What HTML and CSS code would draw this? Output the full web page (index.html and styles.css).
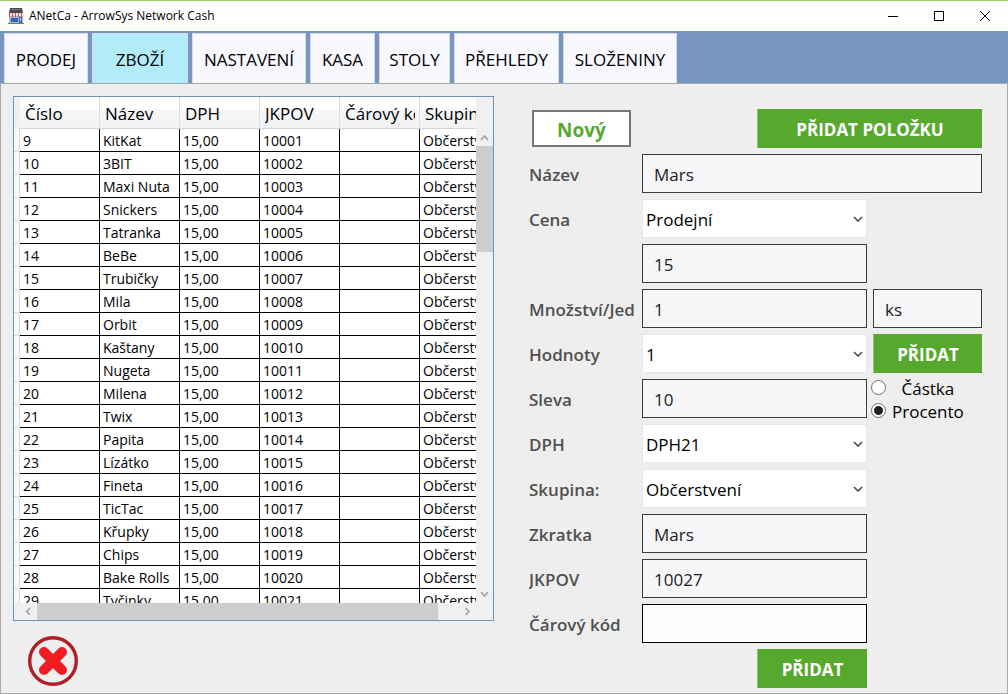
FILE: index.html
```html
<!DOCTYPE html>
<html lang="cs">
<head>
<meta charset="utf-8">
<title>ANetCa - ArrowSys Network Cash</title>
<link rel="stylesheet" href="styles.css">
</head>
<body>
<header class="titlebar">
  <svg class="app-icon" viewBox="0 0 16 16" aria-hidden="true">
    <path d="M2 0h12l1 5H1z" fill="#4a4a4e"/>
    <path d="M3 1h10v1H3z" fill="#77777c"/>
    <path d="M1 6h14v9H1z" fill="#a9b3c4"/>
    <path d="M0 5h16v3H0z" fill="#f4eeee"/>
    <path d="M1 5h1v4H1zM4 5h1v4H4zM7 5h1v4H7zM10 5h1v4h-1zM13 5h1v4h-1z" fill="#cf4a4a"/>
    <path d="M3 10h7v4H3z" fill="#2f62b5"/>
    <path d="M11 9h3v6h-3z" fill="#3a6cc0"/>
    <path d="M12 10h1v3h-1z" fill="#a8c6ee"/>
    <path d="M0 15h16v1H0z" fill="#77777c"/>
  </svg>
  <h1 class="title">ANetCa - ArrowSys Network Cash</h1>
  <div class="window-buttons">
    <button type="button" aria-label="Minimalizovat"><svg viewBox="0 0 10 10"><path d="M0 5.5h10"/></svg></button>
    <button type="button" aria-label="Maximalizovat"><svg viewBox="0 0 10 10"><path d="M.5.5h9v9h-9z"/></svg></button>
    <button type="button" aria-label="Zavřít"><svg viewBox="0 0 10 10"><path d="M0 0l10 10M10 0L0 10"/></svg></button>
  </div>
</header>
<nav class="tabs">
  <button type="button" class="tab">PRODEJ</button>
  <button type="button" class="tab active" aria-current="page">ZBOŽÍ</button>
  <button type="button" class="tab">NASTAVENÍ</button>
  <button type="button" class="tab">KASA</button>
  <button type="button" class="tab">STOLY</button>
  <button type="button" class="tab">PŘEHLEDY</button>
  <button type="button" class="tab">SLOŽENINY</button>
</nav>
<main class="content">
  <section class="left">
    <div class="datagrid">
      <div class="viewport">
        <table class="goods">
          <colgroup><col class="col-mark"><col><col><col><col><col><col></colgroup>
          <thead><tr><td class="mark"></td><th><div>Číslo</div></th><th><div>Název</div></th><th><div>DPH</div></th><th><div>JKPOV</div></th><th><div>Čárový kód</div></th><th><div>Skupina</div></th></tr></thead>
          <tbody>
            <tr><td class="mark"></td><td>9</td><td>KitKat</td><td>15,00</td><td>10001</td><td></td><td>Občerstvení</td></tr>
            <tr><td class="mark"></td><td>10</td><td>3BIT</td><td>15,00</td><td>10002</td><td></td><td>Občerstvení</td></tr>
            <tr><td class="mark"></td><td>11</td><td>Maxi Nuta</td><td>15,00</td><td>10003</td><td></td><td>Občerstvení</td></tr>
            <tr><td class="mark"></td><td>12</td><td>Snickers</td><td>15,00</td><td>10004</td><td></td><td>Občerstvení</td></tr>
            <tr><td class="mark"></td><td>13</td><td>Tatranka</td><td>15,00</td><td>10005</td><td></td><td>Občerstvení</td></tr>
            <tr><td class="mark"></td><td>14</td><td>BeBe</td><td>15,00</td><td>10006</td><td></td><td>Občerstvení</td></tr>
            <tr><td class="mark"></td><td>15</td><td>Trubičky</td><td>15,00</td><td>10007</td><td></td><td>Občerstvení</td></tr>
            <tr><td class="mark"></td><td>16</td><td>Mila</td><td>15,00</td><td>10008</td><td></td><td>Občerstvení</td></tr>
            <tr><td class="mark"></td><td>17</td><td>Orbit</td><td>15,00</td><td>10009</td><td></td><td>Občerstvení</td></tr>
            <tr><td class="mark"></td><td>18</td><td>Kaštany</td><td>15,00</td><td>10010</td><td></td><td>Občerstvení</td></tr>
            <tr><td class="mark"></td><td>19</td><td>Nugeta</td><td>15,00</td><td>10011</td><td></td><td>Občerstvení</td></tr>
            <tr><td class="mark"></td><td>20</td><td>Milena</td><td>15,00</td><td>10012</td><td></td><td>Občerstvení</td></tr>
            <tr><td class="mark"></td><td>21</td><td>Twix</td><td>15,00</td><td>10013</td><td></td><td>Občerstvení</td></tr>
            <tr><td class="mark"></td><td>22</td><td>Papita</td><td>15,00</td><td>10014</td><td></td><td>Občerstvení</td></tr>
            <tr><td class="mark"></td><td>23</td><td>Lízátko</td><td>15,00</td><td>10015</td><td></td><td>Občerstvení</td></tr>
            <tr><td class="mark"></td><td>24</td><td>Fineta</td><td>15,00</td><td>10016</td><td></td><td>Občerstvení</td></tr>
            <tr><td class="mark"></td><td>25</td><td>TicTac</td><td>15,00</td><td>10017</td><td></td><td>Občerstvení</td></tr>
            <tr><td class="mark"></td><td>26</td><td>Křupky</td><td>15,00</td><td>10018</td><td></td><td>Občerstvení</td></tr>
            <tr><td class="mark"></td><td>27</td><td>Chips</td><td>15,00</td><td>10019</td><td></td><td>Občerstvení</td></tr>
            <tr><td class="mark"></td><td>28</td><td>Bake Rolls</td><td>15,00</td><td>10020</td><td></td><td>Občerstvení</td></tr>
            <tr><td class="mark"></td><td>29</td><td>Tyčinky</td><td>15,00</td><td>10021</td><td></td><td>Občerstvení</td></tr>
          </tbody>
        </table>
      </div>
      <div class="vscroll" aria-hidden="true">
        <svg class="arrow" viewBox="0 0 17 17"><path d="M5 11l3.500-4 3.500 4"/></svg>
        <div class="track"><div class="vthumb"></div></div>
        <svg class="arrow" viewBox="0 0 17 17"><path d="M5 6l3.500 4 3.500-4"/></svg>
      </div>
      <div class="hscroll" aria-hidden="true">
        <svg class="arrow" viewBox="0 0 17 17"><path d="M10 5L6.500 8.500 10 12"/></svg>
        <div class="track"><div class="hthumb"></div></div>
        <svg class="arrow" viewBox="0 0 17 17"><path d="M6.500 5L10 8.500 6.500 12"/></svg>
      </div>
    </div>
    <button type="button" class="delete" aria-label="Smazat">
      <svg viewBox="0 0 50 50"><circle cx="25" cy="25" r="23.300" fill="none" stroke="#ae2026" stroke-width="3.400"/><path d="M16 16l18 18M34 16L16 34" stroke="#ee1d24" stroke-width="10" stroke-linecap="round"/></svg>
    </button>
  </section>
  <form class="form">
    <div class="toprow">
      <button type="button" class="new">Nový</button>
      <button type="button" class="green wide">PŘIDAT POLOŽKU</button>
    </div>
    <label for="nazev">Název</label>
    <input class="field span" id="nazev" type="text" value="Mars">
    <label for="cena">Cena</label>
    <div class="combo"><select id="cena"><option>Prodejní</option></select><svg viewBox="0 0 10 6"><path d="M1 1l4 4 4-4"/></svg></div>
    <input class="field mid" type="text" value="15" aria-label="Částka ceny">
    <label for="mnozstvi">Množství/Jednotka</label>
    <input class="field" id="mnozstvi" type="text" value="1">
    <input class="field" type="text" value="ks" aria-label="Jednotka">
    <label for="hodnoty">Hodnoty</label>
    <div class="combo"><select id="hodnoty"><option>1</option></select><svg viewBox="0 0 10 6"><path d="M1 1l4 4 4-4"/></svg></div>
    <button type="button" class="green">PŘIDAT</button>
    <label for="sleva">Sleva</label>
    <input class="field" id="sleva" type="text" value="10">
    <div class="radios">
      <label class="radio"><input type="radio" name="typ"><span>Částka</span></label>
      <label class="radio"><input type="radio" name="typ" checked><span>Procento</span></label>
    </div>
    <label for="dph">DPH</label>
    <div class="combo"><select id="dph"><option>DPH21</option></select><svg viewBox="0 0 10 6"><path d="M1 1l4 4 4-4"/></svg></div>
    <label for="skupina">Skupina:</label>
    <div class="combo"><select id="skupina"><option>Občerstvení</option></select><svg viewBox="0 0 10 6"><path d="M1 1l4 4 4-4"/></svg></div>
    <label for="zkratka">Zkratka</label>
    <input class="field" id="zkratka" type="text" value="Mars">
    <label for="jkpov">JKPOV</label>
    <input class="field" id="jkpov" type="text" value="10027">
    <label for="kod">Čárový kód</label>
    <input class="field empty" id="kod" type="text">
    <button type="submit" class="green submit">PŘIDAT</button>
  </form>
</main>
</body>
</html>
```
FILE: styles.css
```css
* { box-sizing: border-box; }

body {
  margin: 0;
  min-height: 100vh;
  display: flex;
  flex-direction: column;
  background: #eee;
  color: #000;
  font-family: "Open Sans", "Noto Sans", sans-serif;
  font-size: 17px;
}

button, input, select { font: inherit; color: inherit; margin: 0; }
button { padding: 0; border: 0; background: none; }
svg { display: block; }

.titlebar {
  display: flex;
  align-items: center;
  height: 31px;
  padding-left: 8px;
  border-top: 1px solid #a5cf62;
  background: #fff;
}
.app-icon { width: 16px; height: 16px; }
.title { flex: 1; margin: 0 0 0 5px; font-size: 12px; font-weight: 400; line-height: 16px; }
.window-buttons { display: flex; }
.window-buttons button { width: 46px; height: 30px; display: grid; place-items: center; }
.window-buttons svg { width: 10px; height: 10px; overflow: visible; fill: none; stroke: #000; stroke-width: 1; }

.tabs {
  display: grid;
  grid-template-columns: 84px 96px 114px 65px 71px 105px 114px;
  gap: 4px;
  height: 53px;
  padding: 2px 0 0 4px;
  background: #7894c0;
  border-bottom: 1px solid #a9a9a9;
}
.tab {
  padding-top: 2px;
  background: #f8f9fe;
  border: 1px solid #d4dae8;
  border-bottom: 0;
}
.tab.active { background: #b2ebf9; }

.content {
  flex: 1;
  display: grid;
  grid-template-columns: minmax(0, 481fr) minmax(0, 453fr);
  column-gap: 35px;
  padding: 12px 25px 4px 12px;
  border: 1px solid #a9a9a9;
  border-top: 0;
}

.left { display: flex; flex-direction: column; gap: 15px; padding-bottom: 3px; }
.datagrid {
  flex: 1 1 0;
  min-height: 0;
  display: grid;
  grid-template-columns: minmax(0, 1fr) 17px;
  grid-template-rows: minmax(0, 1fr) 17px;
  border: 1px solid #6f92b9;
  background: #f0f0f0;
}
.viewport { overflow: hidden; }
.goods {
  table-layout: fixed;
  width: 486px;
  border-collapse: separate;
  border-spacing: 0;
  font-size: 14px;
  line-height: 20px;
  background: #fff;
}
.col-mark { width: 6px; }
.goods th {
  height: 32px;
  padding: 2px 4px 0 5px;
  font-size: 17px;
  font-weight: 400;
  text-align: left;
  white-space: nowrap;
  background: linear-gradient(#fff 40%, #f7f8fa 40%, #f1f2f4);
  border-right: 1px solid #dedfe1;
  border-bottom: 1px solid #d5d5d5;
}
.goods th div { overflow: hidden; line-height: 24px; }
.goods tbody td {
  height: 23px;
  padding: 2px 0 0 3px;
  white-space: nowrap;
  overflow: hidden;
  border-right: 1px solid #000;
  border-bottom: 1px solid #000;
}
.goods thead .mark { padding: 0; background: #f0f0f0; }
.goods tbody .mark { padding: 0; background: #fafafb; border-color: #d9dadd; }

.vscroll { display: flex; flex-direction: column; padding-top: 32px; }
.hscroll { grid-column: 1 / -1; display: flex; padding: 0 17px 0 6px; }
.arrow { flex: none; width: 17px; height: 17px; fill: none; stroke: #a0a0a0; stroke-width: 1.500; }
.track { flex: 1; }
.vthumb { height: 24%; background: #cdcdcd; }
.hthumb { width: 95%; height: 100%; background: #cdcdcd; }

.delete { width: 50px; height: 50px; margin-left: 15px; }

.form {
  display: grid;
  grid-template-columns: 107px minmax(0, 225fr) minmax(0, 109fr);
  grid-auto-rows: 39px;
  align-content: start;
  gap: 6px;
  padding-top: 13px;
}
.form > label {
  grid-column: 1;
  align-self: center;
  margin-right: 1px;
  padding-top: 2px;
  color: #505050;
  font-weight: 600;
  white-space: nowrap;
  overflow: hidden;
}
.toprow { grid-column: 1 / -1; display: flex; justify-content: space-between; align-items: center; }
.new {
  width: 99px;
  height: 37px;
  margin-left: 3px;
  padding-top: 2px;
  background: #fff;
  border: 2px solid #777;
  color: #57a92d;
  font-size: 19px;
  line-height: 24px;
  font-weight: 700;
}
.green { padding-top: 2px; background: #57a92d; border-left: 1px solid #8fc572; color: #fff; font-weight: 700; }
.wide { width: 225px; height: 39px; }
.submit { grid-column: 2; justify-self: end; width: 110px; }
.field {
  width: 100%;
  min-width: 0;
  padding: 2px 11px 0 11px;
  background: #f6f6f9;
  border: 1px solid #3c3c40;
  color: #1c1c1c;
}
.mid { grid-column: 2; }
.span { grid-column: 2 / -1; }
.empty { background: #fdfdfe; border-color: #000; }
.combo { position: relative; }
.combo select {
  width: 100%;
  height: 100%;
  padding: 2px 24px 0 3px;
  appearance: none;
  background: #fff;
  border: 1px solid #e4e7f0;
  border-radius: 0;
}
.combo svg {
  position: absolute;
  right: 4px;
  top: 17px;
  width: 10px;
  height: 6px;
  fill: none;
  stroke: #444;
  stroke-width: 1.500;
  pointer-events: none;
}
.radios { align-self: center; justify-self: start; margin-left: -2px; }
.radio { display: flex; align-items: center; gap: 6px; height: 23px; }
.radio input {
  flex: none;
  width: 15px;
  height: 15px;
  appearance: none;
  background: #fff;
  border: 1px solid #707070;
  border-radius: 50%;
}
.radio input:checked { background: radial-gradient(circle, #222 4px, #fff 5px); }
.radio span { flex: 1; text-align: center; padding-top: 2px; }
```
